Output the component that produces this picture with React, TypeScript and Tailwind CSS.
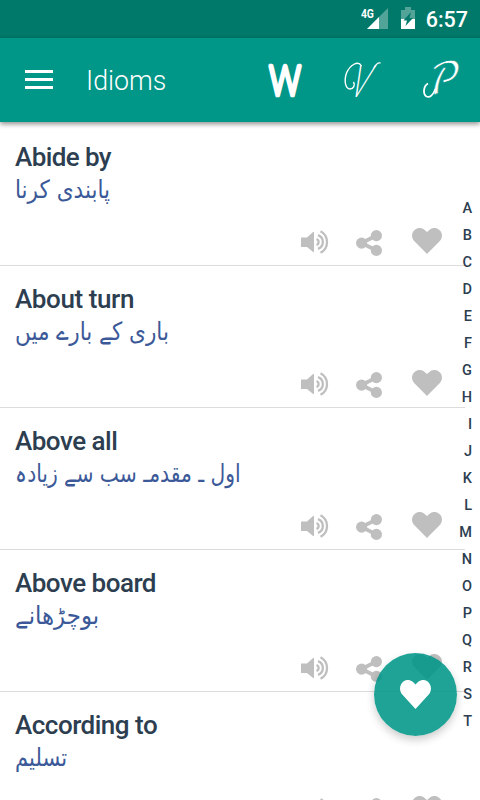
import React from "react";

const idioms = [
  { en: "Abide by", ur: "پابندی کرنا", scale: "scale-x-[0.864]", track: "tracking-[-0.6px]" },
  { en: "About turn", ur: "باری کے بارے میں", scale: "scale-x-[0.862]", track: "tracking-[-0.4px]" },
  { en: "Above all", ur: "اول ـ مقدمـ سب سے زیادہ", scale: "scale-x-[0.811]", track: "tracking-[-0.5px]" },
  { en: "Above board", ur: "بوچڑھانے", scale: "scale-x-[0.915]", track: "tracking-[-0.5px]" },
  { en: "According to", ur: "تسلیم", scale: "scale-x-[0.845]", track: "tracking-[-0.5px]" },
];

const letters = "ABCDEFGHIJKLMNOPQRST".split("");

const HEART =
  "M15 26 L2.4 13.3 C-.8 9.8 -.6 5.2 2.1 2.4 C5.2 -.8 9.7 -.7 12.6 1.9 L15 4.1 L17.4 1.9 C20.3 -.7 24.8 -.8 27.9 2.4 C30.6 5.2 30.8 9.8 27.6 13.3 Z";

function Speaker() {
  return (
    <svg width="29" height="24" viewBox="0 0 29 24" fill="none">
      <path d="M0 7.5 H6 L11.5 2.5 Q13 1 13 3 V21 Q13 23 11.5 21.5 L6 17 H0 Z" fill="#bfbfbf" />
      <path
        d="M15.5 9 A3.2 3.2 0 0 1 15.5 15 M17 5.2 A7.2 7.2 0 0 1 17 18.8 M19.5 1.2 A12.2 12.2 0 0 1 19.5 22.8"
        stroke="#bfbfbf"
        strokeWidth="2.3"
      />
    </svg>
  );
}

function Share() {
  return (
    <svg width="26" height="26" viewBox="0 0 26 26" fill="#bfbfbf">
      <path d="M20.5 5.5 L5.5 13 L20.5 20.5" fill="none" stroke="#bfbfbf" strokeWidth="3.8" />
      <circle cx="5.6" cy="13.1" r="5.6" />
      <circle cx="20.4" cy="5.6" r="5.6" />
      <circle cx="20.4" cy="20.4" r="5.6" />
    </svg>
  );
}

function Heart({ color, className }: { color: string; className: string }) {
  return (
    <svg viewBox="0 0 30 26" preserveAspectRatio="none" className={className}>
      <path d={HEART} fill={color} />
    </svg>
  );
}

export default function App() {
  return (
    <div className="relative flex h-[800px] w-[480px] flex-col overflow-hidden bg-white font-[Roboto,sans-serif]">
      <div className="flex h-[38px] shrink-0 items-start justify-end bg-[#00796b] text-white">
        <span className="z-10 mt-[8px] mr-[-8px] origin-right scale-x-[0.8] text-[13px] leading-[11px] font-bold tracking-[-0.5px]">4G</span>
        <svg width="22" height="22" viewBox="0 0 22 22" className="mt-[8px]">
          <path d="M22 0 V21 H1 L13 9 Z" fill="#52a398" />
          <path d="M13 9 V21 H1 Z" fill="#fff" />
        </svg>
        <svg width="14" height="23" viewBox="0 0 14 23" className="mt-[7px] ml-[13px]">
          <path d="M0 3 H4 V0 H10 V3 H14 V22 H0 Z" fill="#52a398" />
          <path d="M0 12 H14 V22 H0 Z" fill="#fff" />
          <path d="M10 5 L2.5 13.5 H6 L4.5 19 L12 11 H8.5 Z" fill="#00796b" />
        </svg>
        <span className="mt-[8px] mr-[12px] ml-[11px] text-[21.5px] leading-[24px] font-medium">6:57</span>
      </div>

      <header className="z-10 flex h-[84px] shrink-0 items-center bg-[#009688] text-white shadow-[0_2px_5px_rgba(0,0,0,0.45)]">
        <div className="mb-[1px] ml-[25px] flex w-7 flex-col gap-[5px]">
          <div className="h-[3px] bg-white" />
          <div className="h-[3px] bg-white" />
          <div className="h-[3px] bg-white" />
        </div>
        <h1 className="ml-[33px] w-[174px] origin-left scale-x-[0.955] pt-[1px] text-[28px] leading-[34px] font-light">Idioms</h1>
        <div className="flex items-center">
          <svg width="50" height="60" viewBox="260 50 50 60" className="overflow-visible font-[Lato,sans-serif]">
            <text
              x="269.2"
              y="95"
              fontSize="42"
              fontWeight="300"
              textLength="31.5"
              lengthAdjust="spacingAndGlyphs"
              fill="#fff"
              stroke="#fff"
              strokeWidth="4.6"
              strokeLinejoin="round"
            >
              W
            </text>
          </svg>
          <svg width="60" height="60" viewBox="335 50 60 60" className="ml-[25px] font-[Lato,sans-serif]">
            <text
              transform="translate(347.5 97) skewX(-21)"
              fontSize="45"
              fontWeight="300"
              textLength="17"
              lengthAdjust="spacingAndGlyphs"
              fill="#fff"
            >
              V
            </text>
            <path
              d="M361.5 66 C358 60 350 65 346.5 73 C343.5 82 346 89 350 89 C353.500 89 355.500 85 353.500 82 M374 68 Q377 62 380.500 63"
              fill="none"
              stroke="#fff"
              strokeWidth="1.4"
            />
          </svg>
          <svg width="60" height="60" viewBox="415 50 60 60" className="ml-[20px] font-['DejaVu_Math_TeX_Gyre','DejaVu_Sans',serif]">
            <text transform="translate(426.5 94) scale(.88 1.05) skewX(-10)" fontSize="42" fill="#fff" stroke="#009688" strokeWidth="0.6">
              𝒫
            </text>
            <path
              d="M435.500 89 C433 95 430 98 426.500 96.500 C422.500 94 423.500 86 428 83.500"
              fill="none"
              stroke="#fff"
              strokeWidth="1.8"
            />
          </svg>
        </div>
      </header>

      <main className="flex min-h-0 flex-1 pt-[2px]">
        <div className="w-[465px] shrink-0">
          {idioms.map((item) => (
            <section key={item.en} className="flex h-[142px] flex-col border-b border-[#dcdcdc] pl-[15px]">
              <h2 className={`mt-[17px] text-[26px] leading-[32px] font-medium text-[#2c3e50] ${item.track}`}>{item.en}</h2>
              <p
                lang="ur"
                dir="rtl"
                className={`h-[32px] origin-left self-start font-['DejaVu_Sans',sans-serif] text-[25px] leading-[34px] whitespace-nowrap text-[#3b5998] ${item.scale}`}
              >
                {item.ur}
              </p>
              <div className="mt-[23px] flex items-start pl-[286px]">
                <div className="mt-[2px]"><Speaker /></div>
                <div className="mt-[2px] ml-[26px]"><Share /></div>
                <Heart color="#bfbfbf" className="ml-[30px] h-[26px] w-[30px]" />
              </div>
            </section>
          ))}
        </div>
        <nav className="mt-[71px] -ml-[13px] flex w-[20px] flex-col items-end">
          {letters.map((letter) => (
            <span key={letter} className="h-[27px] shrink-0 text-[14.5px] leading-[27px] font-medium text-[#2c3e50]">
              {letter}
            </span>
          ))}
        </nav>
      </main>

      <button className="absolute top-[653px] left-[374px] flex h-[83px] w-[83px] items-center justify-center rounded-full bg-[#009688]/88 shadow-[0_4px_8px_rgba(0,0,0,0.2)]">
        <Heart color="#fff" className="h-[29px] w-[31px]" />
      </button>
    </div>
  );
}
